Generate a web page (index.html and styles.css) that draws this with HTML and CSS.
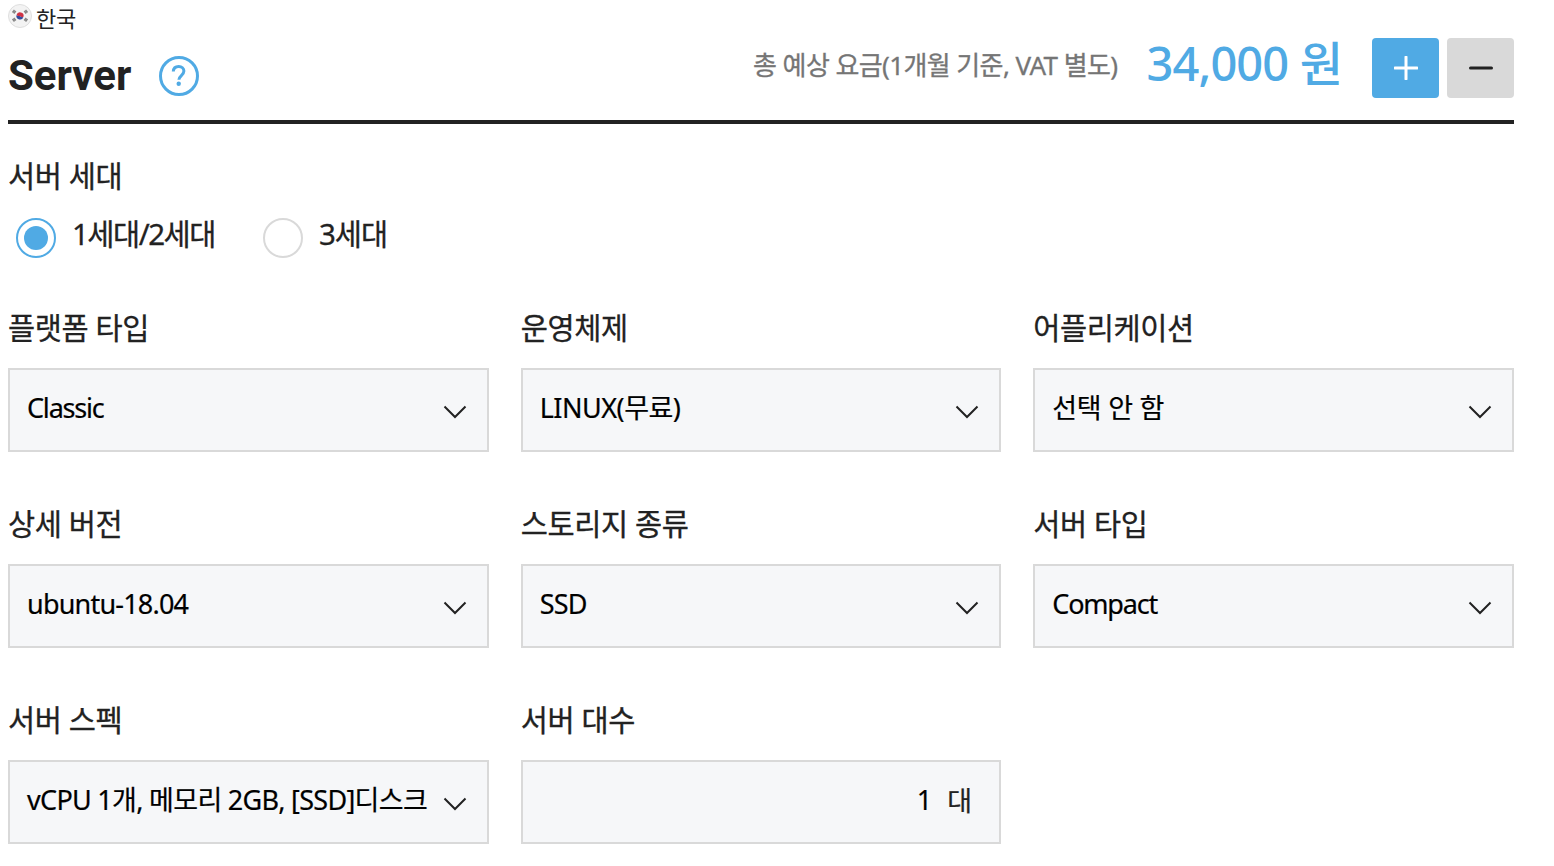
FILE: index.html
```html
<!DOCTYPE html>
<html lang="ko">
<head>
  <meta charset="UTF-8">
  <meta name="viewport" content="width=device-width, initial-scale=1.0">
  <title>Server</title>
  <link rel="stylesheet" href="styles.css">
</head>
<body>
  <div class="container">
    <!-- Region -->
    <div class="region">
      <svg class="flag" viewBox="0 0 24 24">
        <circle cx="12" cy="12" r="11.5" fill="#f3f3f3" stroke="#dedede"/>
        <path d="M8.5 11a3.6 3.6 0 0 1 7 1.8c-2 1.2-2.8-.8-4.1-.9-1 0-1.9.4-2.9-.9z" fill="#cf3345"/>
        <path d="M8.5 11c1 1.3 1.9.9 2.9.9 1.3.1 2.1 2.1 4.1.9a3.6 3.6 0 0 1-7-1.8z" fill="#344b9c"/>
        <path d="M4.5 8.5l2-2.5M5.8 9.5l2-2.5M4.5 15l2 2.5M5.8 14l2 2.5M19.5 8.5l-2-2.5M18.2 9.5l-2-2.5M19.5 15l-2 2.5M18.2 14l-2 2.5" stroke="#858585" stroke-width="1.5"/>
      </svg>
      <span>한국</span>
    </div>

    <!-- Title and price -->
    <div class="header">
      <h1>Server</h1>
      <svg class="help" viewBox="0 0 40 40">
        <circle cx="20" cy="20" r="18.5"/>
        <path d="M14.3 15.5c.2-3.3 2.5-5 5.4-5 3.1 0 5.2 1.9 5.2 4.6 0 4.3-5 4.6-5 8.7"/>
        <circle class="dot" cx="19.7" cy="27.8" r="2.2"/>
      </svg>
      <div class="price-label">총 예상 요금(1개월 기준, VAT 별도)</div>
      <div class="price">34,000 원</div>
      <div class="buttons">
        <button class="btn-add" aria-label="추가">
          <svg viewBox="0 0 24 24"><path d="M12 1v22M1 12h22"/></svg>
        </button>
        <button class="btn-remove" aria-label="삭제">
          <svg viewBox="0 0 24 24"><path d="M1.5 12h21"/></svg>
        </button>
      </div>
    </div>

    <!-- Server generation -->
    <div class="generation">
      <div class="label">서버 세대</div>
      <div class="radios">
        <span class="radio checked"></span>
        <span class="radio-text first">1세대/2세대</span>
        <span class="radio"></span>
        <span class="radio-text">3세대</span>
      </div>
    </div>

    <!-- Options -->
    <div class="grid">
      <div class="field">
        <div class="label">플랫폼 타입</div>
        <div class="select">
          <span class="latin">Classic</span>
          <svg class="arrow" viewBox="0 0 24 14"><path d="M1.5 1.5L12 12 22.5 1.5"/></svg>
        </div>
      </div>
      <div class="field">
        <div class="label">운영체제</div>
        <div class="select">
          <span class="linux">LINUX(무료)</span>
          <svg class="arrow" viewBox="0 0 24 14"><path d="M1.5 1.5L12 12 22.5 1.5"/></svg>
        </div>
      </div>
      <div class="field">
        <div class="label">어플리케이션</div>
        <div class="select">
          <span class="app">선택 안 함</span>
          <svg class="arrow" viewBox="0 0 24 14"><path d="M1.5 1.5L12 12 22.5 1.5"/></svg>
        </div>
      </div>
      <div class="field">
        <div class="label">상세 버전</div>
        <div class="select">
          <span>ubuntu-18.04</span>
          <svg class="arrow" viewBox="0 0 24 14"><path d="M1.5 1.5L12 12 22.5 1.5"/></svg>
        </div>
      </div>
      <div class="field">
        <div class="label">스토리지 종류</div>
        <div class="select">
          <span>SSD</span>
          <svg class="arrow" viewBox="0 0 24 14"><path d="M1.5 1.5L12 12 22.5 1.5"/></svg>
        </div>
      </div>
      <div class="field">
        <div class="label">서버 타입</div>
        <div class="select">
          <span class="latin">Compact</span>
          <svg class="arrow" viewBox="0 0 24 14"><path d="M1.5 1.5L12 12 22.5 1.5"/></svg>
        </div>
      </div>
      <div class="field">
        <div class="label">서버 스펙</div>
        <div class="select">
          <span class="spec">vCPU 1개, 메모리 2GB, [SSD]디스크</span>
          <svg class="arrow" viewBox="0 0 24 14"><path d="M1.5 1.5L12 12 22.5 1.5"/></svg>
        </div>
      </div>
      <div class="field">
        <div class="label">서버 대수</div>
        <div class="select count">
          <span>1</span>
          <span class="unit">대</span>
        </div>
      </div>
    </div>
  </div>
</body>
</html>
```
FILE: styles.css
```css
* {
  box-sizing: border-box;
}

body {
  margin: 0;
  background-color: #fff;
  color: #222;
  font-family: "Noto Sans", "Noto Sans CJK KR", sans-serif;
  overflow: hidden;
}

.container {
  width: 1506px;
  margin-left: 8px;
  white-space: nowrap;
}

/* Region */
.region {
  display: flex;
  height: 38px;
  padding-top: 4px;
  font-size: 22px;
  line-height: 28px;
  letter-spacing: -0.2px;
}

.flag {
  width: 24px;
  height: 24px;
  margin-right: 4px;
}

/* Title and price */
.header {
  display: flex;
  align-items: flex-start;
  height: 86px;
  border-bottom: 4px solid #222;
}

h1 {
  width: 151px;
  margin: 13px 0 0;
  font-family: Roboto, sans-serif;
  font-size: 42px;
  line-height: 50px;
  font-weight: 700;
}

.help {
  width: 40px;
  height: 40px;
  margin-top: 18px;
  fill: none;
  stroke: #50aae4;
  stroke-width: 3;
}

.help .dot {
  fill: #50aae4;
  stroke: none;
}

.price-label {
  margin-left: auto;
  font-size: 26px;
  line-height: 54px;
  letter-spacing: -0.6px;
  color: #757575;
  -webkit-text-stroke: 0.3px;
}

.price {
  margin-left: 29px;
  font-size: 47px;
  line-height: 50px;
  font-weight: 500;
  letter-spacing: -0.9px;
  color: #50aae4;
}

.buttons {
  display: flex;
  gap: 8px;
  margin-left: 30px;
}

.buttons button {
  display: flex;
  align-items: center;
  justify-content: center;
  width: 67px;
  height: 60px;
  padding: 0;
  border: none;
  border-radius: 4px;
}

.buttons svg {
  width: 24px;
  height: 24px;
  fill: none;
  stroke-width: 3;
  stroke-linecap: round;
}

.btn-add {
  background-color: #50aae4;
  stroke: #fff;
}

.btn-remove {
  background-color: #d9d9d9;
  stroke: #222;
}

/* Server generation */
.label {
  font-size: 29.5px;
  line-height: 44px;
  letter-spacing: -0.4px;
  -webkit-text-stroke: 0.3px;
}

.generation {
  height: 182px;
  padding-top: 30px;
}

.radios {
  display: flex;
  padding: 20px 0 0 8px;
}

.radio {
  width: 40px;
  height: 40px;
  border: 2px solid #d9d9d9;
  border-radius: 50%;
}

.radio.checked {
  padding: 6px;
  border-color: #50aae4;
  background: #50aae4 content-box;
}

.radio-text {
  margin-left: 16px;
  font-size: 29.5px;
  line-height: 32px;
  letter-spacing: -1px;
  -webkit-text-stroke: 0.3px;
}

.radio-text.first {
  width: 191px;
  letter-spacing: -1.5px;
}

/* Options */
.grid {
  display: grid;
  grid-template-columns: repeat(3, 1fr);
  gap: 50px 32px;
}

.select {
  display: flex;
  align-items: center;
  justify-content: space-between;
  height: 84px;
  margin-top: 18px;
  padding: 0 20px 0 17px;
  border: 2px solid #d9d9d9;
  background-color: #f6f7f9;
  color: #000;
  font-size: 27px;
  line-height: 40px;
  letter-spacing: -0.8px;
  -webkit-text-stroke: 0.2px;
}

.select span {
  margin-bottom: 4px;
}

.select .latin {
  letter-spacing: -1.2px;
}

.select .linux {
  letter-spacing: -0.5px;
}

.select .app {
  letter-spacing: -0.3px;
}

.select .spec {
  letter-spacing: -0.7px;
}

.arrow {
  width: 24px;
  height: 14px;
  margin-top: 4px;
  fill: none;
  stroke: #222;
  stroke-width: 2;
}

.count {
  justify-content: flex-end;
  gap: 16px;
  padding-right: 28px;
}

.select .unit {
  margin-bottom: 2px;
  color: #222;
}
```
